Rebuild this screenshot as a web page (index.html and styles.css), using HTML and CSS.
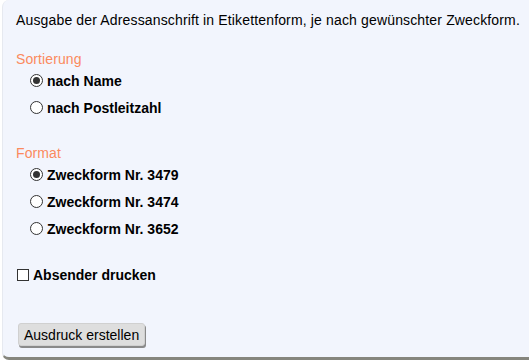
FILE: index.html
```html
<!DOCTYPE html>
<html lang="de">
<head>
  <meta charset="UTF-8" />
  <title>Etiketten</title>
  <link rel="stylesheet" href="styles.css">
</head>
<body>
  <div class="panel">
    <p class="intro">Ausgabe der Adressanschrift in Etikettenform, je nach gewünschter Zweckform.</p>

    <div class="group">
      <div class="group-title">Sortierung</div>
      <label class="option"><input type="radio" name="sort" checked> nach Name</label>
      <label class="option"><input type="radio" name="sort"> nach Postleitzahl</label>
    </div>

    <div class="group">
      <div class="group-title">Format</div>
      <label class="option"><input type="radio" name="format" checked> Zweckform Nr. 3479</label>
      <label class="option"><input type="radio" name="format"> Zweckform Nr. 3474</label>
      <label class="option"><input type="radio" name="format"> Zweckform Nr. 3652</label>
    </div>

    <label class="check"><input type="checkbox"> Absender drucken</label>

    <div class="actions">
      <button type="button">Ausdruck erstellen</button>
    </div>
  </div>
</body>
</html>
```

FILE: styles.css
```css
* {
  box-sizing: border-box;
}

body {
  margin: 0;
  background: #fff;
  font-family: "Liberation Sans", Arial, sans-serif;
  font-size: 14px;
  color: #000;
}

.panel {
  margin-left: 2px;
  height: 360px;
  background: #f2f5fd;
  border-left: 1px solid #e6e9f0;
  border-bottom: 3px solid #85857d;
  border-radius: 7px 0 0 7px;
  padding: 12px 0 0 13px;
}

.intro {
  margin: 0;
  line-height: 16px;
  letter-spacing: 0.15px;
}

.group {
  margin-top: 24px;
}

.group + .group {
  margin-top: 25px;
}

.group-title {
  color: #fb8a5e;
  line-height: 15px;
  letter-spacing: 0.1px;
}

.option {
  display: flex;
  align-items: center;
  gap: 4px;
  height: 27px;
  padding-left: 14px;
  font-weight: bold;
}

.option input {
  appearance: none;
  margin: 0;
  width: 13px;
  height: 13px;
  border: 1px solid #333;
  border-radius: 50%;
  background: #fff;
  display: grid;
  place-content: center;
}

.option input:checked::before {
  content: "";
  width: 7px;
  height: 7px;
  border-radius: 50%;
  background: #333;
}

.check {
  display: flex;
  align-items: center;
  gap: 4px;
  margin-top: 25px;
  font-weight: bold;
  line-height: 16px;
}

.check input {
  appearance: none;
  margin: 0 0 0 1px;
  width: 12px;
  height: 12px;
  border: 1px solid #333;
  background: #fff;
}

.actions {
  margin-top: 40px;
}

button {
  font-family: "Liberation Sans", Arial, sans-serif;
  font-size: 14px;
  color: #000;
  background: #dedede;
  border: 1px solid #d0d0d0;
  border-radius: 3px;
  box-shadow: 1px 2px 0 #8a8a8a;
  padding: 3px 5px;
  height: 23px;
  margin-left: 2px;
}
```
